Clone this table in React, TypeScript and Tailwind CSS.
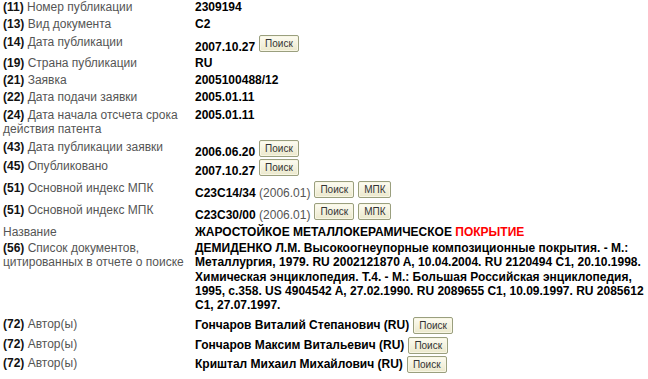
import React from "react";

type Row = {
  num?: string;
  label: string;
  value: React.ReactNode;
  buttons?: string[];
  kind?: "plain" | "btn" | "author";
  rowClass: string;
};

const SearchButton = ({ text }: { text: string }) => (
  <span className="inline-flex items-center justify-center h-[17px] px-[5px] border border-[#9a9f7e] rounded-[2px] bg-gradient-to-b from-[#fdfcf2] to-[#ebe8cc] text-[10px] font-normal leading-none text-[#333] shadow-[inset_0_0_0_1px_#f8f6e4]">
    {text}
  </span>
);

const rows: Row[] = [
  { num: "(11)", label: "Номер публикации", value: "2309194", rowClass: "h-[17px]" },
  { num: "(13)", label: "Вид документа", value: "C2", rowClass: "h-[18px]" },
  { num: "(14)", label: "Дата публикации", value: "2007.10.27", buttons: ["Поиск"], kind: "btn", rowClass: "h-[21px]" },
  { num: "(19)", label: "Страна публикации", value: "RU", rowClass: "h-[17px]" },
  { num: "(21)", label: "Заявка", value: "2005100488/12", rowClass: "h-[17px]" },
  { num: "(22)", label: "Дата подачи заявки", value: "2005.01.11", rowClass: "h-[18px]" },
  { num: "(24)", label: "Дата начала отсчета срока действия патента", value: "2005.01.11", rowClass: "h-[32px]" },
  { num: "(43)", label: "Дата публикации заявки", value: "2006.06.20", buttons: ["Поиск"], kind: "btn", rowClass: "h-[19px]" },
  { num: "(45)", label: "Опубликовано", value: "2007.10.27", buttons: ["Поиск"], kind: "btn", rowClass: "h-[22px]" },
  {
    num: "(51)",
    label: "Основной индекс МПК",
    value: (
      <>
        C23C14/34 <span className="font-normal text-[#555]">(2006.01)</span>
      </>
    ),
    buttons: ["Поиск", "МПК"],
    kind: "btn",
    rowClass: "h-[22px]",
  },
  {
    num: "(51)",
    label: "Основной индекс МПК",
    value: (
      <>
        C23C30/00 <span className="font-normal text-[#555]">(2006.01)</span>
      </>
    ),
    buttons: ["Поиск", "МПК"],
    kind: "btn",
    rowClass: "h-[22px]",
  },
  {
    label: "Название",
    value: (
      <>
        ЖАРОСТОЙКОЕ МЕТАЛЛОКЕРАМИЧЕСКОЕ <span className="text-[#ff0000]">ПОКРЫТИЕ</span>
      </>
    ),
    rowClass: "h-[16px]",
  },
  {
    num: "(56)",
    label: "Список документов, цитированных в отчете о поиске",
    value:
      "ДЕМИДЕНКО Л.М. Высокоогнеупорные композиционные покрытия. - М.: Металлургия, 1979. RU 2002121870 A, 10.04.2004. RU 2120494 C1, 20.10.1998. Химическая энциклопедия. Т.4. - М.: Большая Российская энциклопедия, 1995, с.358. US 4904542 A, 27.02.1990. RU 2089655 C1, 10.09.1997. RU 2085612 C1, 27.07.1997.",
    rowClass: "h-[76px]",
  },
  { num: "(72)", label: "Автор(ы)", value: "Гончаров Виталий Степанович (RU)", buttons: ["Поиск"], kind: "author", rowClass: "h-[20px]" },
  { num: "(72)", label: "Автор(ы)", value: "Гончаров Максим Витальевич (RU)", buttons: ["Поиск"], kind: "author", rowClass: "h-[19px]" },
  { num: "(72)", label: "Автор(ы)", value: "Криштал Михаил Михайлович (RU)", buttons: ["Поиск"], kind: "author", rowClass: "h-[20px]" },
];

export default function App() {
  return (
    <div className="w-[648px] h-[379px] overflow-hidden bg-white font-['Liberation_Sans',Arial,sans-serif] text-[12px] leading-[14.3px]">
      {rows.map((row, i) => (
        <div key={i} className={`flex ${row.rowClass}`}>
          <div className="w-[195px] shrink-0 pl-[3px] pr-[7px] text-[#555]">
            {row.num && <span className="font-bold text-[#111]">{row.num}</span>}
            {row.num ? " " : ""}
            {row.label}
          </div>
          <div className="w-[453px] font-bold text-black">
            {row.buttons ? (
              <div className="flex items-start gap-[4px]">
                <span className={row.kind === "author" ? "pt-[1px]" : "pt-[5px]"}>{row.value}</span>
                {row.buttons.map((b, j) => (
                  <SearchButton key={j} text={b} />
                ))}
              </div>
            ) : (
              row.value
            )}
          </div>
        </div>
      ))}
    </div>
  );
}
